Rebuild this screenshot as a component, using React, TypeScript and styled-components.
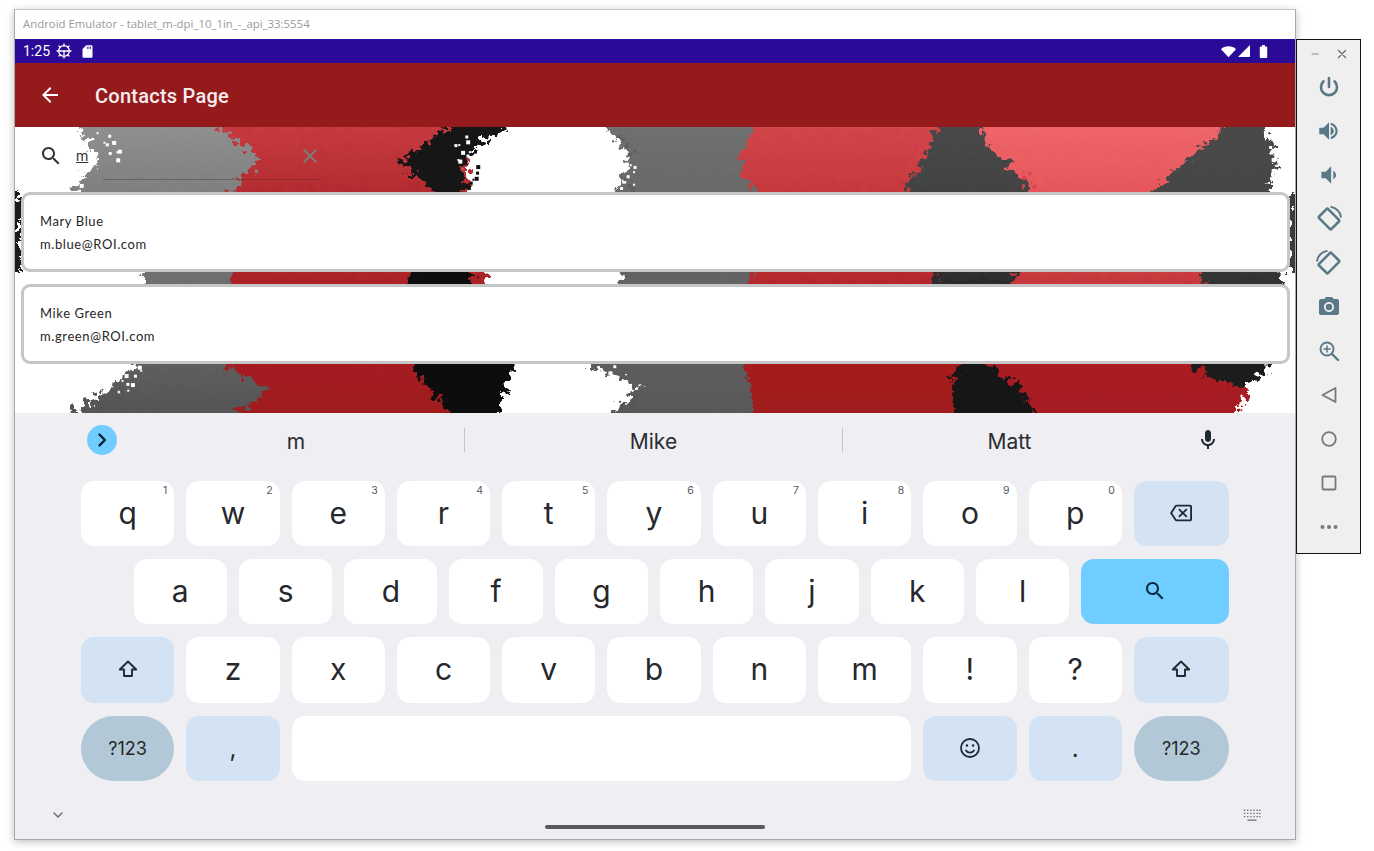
import React from 'react';
import styled, { createGlobalStyle } from 'styled-components';

const GlobalStyle = createGlobalStyle`
    html, body {
        margin: 0;
        padding: 0;
        background: #ffffff;
        font-family: "Roboto", "Liberation Sans", sans-serif;
    }
`;

const PATHS = {
    search: 'M15.5 14h-.79l-.28-.27C15.41 12.59 16 11.11 16 9.5 16 5.91 13.09 3 9.5 3S3 5.91 3 9.5 5.91 16 9.5 16c1.61 0 3.09-.59 4.23-1.57l.27.28v.79l5 4.99L20.49 19l-4.99-5zm-6 0C7.01 14 5 11.99 5 9.5S7.01 5 9.5 5 14 7.01 14 9.5 11.99 14 9.5 14z',
    back: 'M20 11H7.83l5.59-5.59L12 4l-8 8 8 8 1.41-1.41L7.83 13H20v-2z',
    close: 'M19 6.41L17.59 5 12 10.59 6.41 5 5 6.41 10.59 12 5 17.59 6.41 19 12 13.41 17.59 19 19 17.59 13.41 12z',
    mic: 'M12 14c1.66 0 3-1.34 3-3V5c0-1.66-1.34-3-3-3S9 3.34 9 5v6c0 1.66 1.34 3 3 3zm5-3c0 2.76-2.24 5-5 5s-5-2.24-5-5H5c0 3.53 2.61 6.43 6 6.92V21h2v-3.08c3.39-.49 6-3.39 6-6.92h-2z',
    backspace: 'M22 3H7c-.69 0-1.23.35-1.59.88L0 12l5.41 8.11c.36.53.9.89 1.59.89h15c1.1 0 2-.9 2-2V5c0-1.1-.9-2-2-2zm0 16H7.07L2.4 12l4.66-7H22v14zm-11.59-2L14 13.41 17.59 17 19 15.59 15.41 12 19 8.41 17.59 7 14 10.59 10.41 7 9 8.41 12.59 12 9 15.59z',
    volumeUp: 'M3 9v6h4l5 5V4L7 9H3zm10.5-4.6v2.1c2.7.7 4.5 3 4.5 5.5s-1.800 4.800-4.500 5.500v2.100c3.900-.800 6.500-4 6.500-7.600s-2.600-6.800-6.500-7.600zM13.500 8v8c1.800-.700 3-2.200 3-4s-1.200-3.300-3-4z',
    volumeDown: 'M5 9v6h4l5 5V4L9 9H5zm13.500 3c0-1.770-1.020-3.290-2.500-4.030v8.050c1.480-.730 2.500-2.250 2.500-4.020z',
    camera: 'M9 2L7.170 4H4c-1.100 0-2 .900-2 2v12c0 1.100.900 2 2 2h16c1.100 0 2-.900 2-2V6c0-1.100-.900-2-2-2h-3.170L15 2H9zm3 15c-2.760 0-5-2.240-5-5s2.240-5 5-5 5 2.240 5 5-2.240 5-5 5zm0-8.200a3.200 3.200 0 1 0 0 6.400 3.200 3.200 0 0 0 0-6.400z',
    sdCard: 'M18 2h-8L4.020 8 4 20c0 1.100.900 2 2 2h12c1.100 0 2-.900 2-2V4c0-1.100-.900-2-2-2zM11 4h1.200v4H11zM13.700 4h1.200v4h-1.200zM16.400 4h1.200v4h-1.200z',
};

const Svg = styled.svg<{ $size: number; $color: string }>`
    display: block;
    flex: none;
    width: ${p => p.$size}px;
    height: ${p => p.$size}px;
    fill: ${p => p.$color};
    fill-rule: evenodd;
`;

const Line = styled.g<{ $color: string; $width: number }>`
    fill: none;
    stroke: ${p => p.$color};
    stroke-width: ${p => p.$width};
    stroke-linecap: round;
    stroke-linejoin: round;
`;

const Icon = ({ d, size = 24, color = '#000' }: { d: string; size?: number; color?: string }) => (
    <Svg viewBox="0 0 24 24" $size={size} $color={color}><path d={d} /></Svg>
);

const Stroke = ({ size = 24, color = '#000', width = 2, children }: { size?: number; color?: string; width?: number; children: React.ReactNode }) => (
    <Svg viewBox="0 0 24 24" $size={size} $color="none"><Line $color={color} $width={width}>{children}</Line></Svg>
);

const ShiftIcon = () => (
    <Stroke size={24} color="#1f2a33" width={1.9}>
        <path d="M12 4.500 L3.800 12.500 H8 V19 H16 V12.500 H20.200 Z" />
    </Stroke>
);

const EmojiIcon = () => (
    <Stroke size={24} color="#1f2a33" width={1.8}>
        <circle cx="12" cy="12" r="9" />
        <path d="M8 14.500c1 1.500 2.400 2.200 4 2.200s3-.700 4-2.200" />
        <path d="M8.900 9.500h.1M15 9.500h.1" strokeWidth="2.400" />
    </Stroke>
);

// status bar glyphs
const GearIcon = () => (
    <Stroke size={16} color="#fff" width={2}>
        <circle cx="12" cy="12" r="8" />
        <path d="M4 12h16M12 12v8M12 1.500v3M12 19.500v3M1.500 12h3M19.500 12h3M4.500 4.500l2 2M17.500 17.500l2 2M19.500 4.500l-2 2M4.500 19.500l2-2" />
    </Stroke>
);

const WifiIcon = () => (
    <Svg viewBox="0 0 16 12" $size={15} $color="#fff"><path d="M0 3.500C2 1.500 5 .500 8 .500s6 1 8 3L8 12z" /></Svg>
);

const SignalIcon = () => (
    <Svg viewBox="0 0 12 12" $size={12} $color="#fff"><path d="M12 0v12H0z" /></Svg>
);

const BatteryIcon = () => (
    <Svg viewBox="0 0 8 14" $size={13} $color="#fff"><path d="M2.500 0h3v1.500H7c.600 0 1 .400 1 1V13c0 .600-.400 1-1 1H1c-.600 0-1-.400-1-1V2.500c0-.600.400-1 1-1h1.500z" /></Svg>
);

// emulator side panel glyphs
const PowerIcon = () => (
    <Stroke size={24} color="#5b7887" width={2.600}>
        <path d="M12 3v9" />
        <path d="M6.500 6.300a8 8 0 1 0 11 0" />
    </Stroke>
);

const RotateIcon = ({ flip }: { flip?: boolean }) => (
    <Stroke size={28} color="#5b7887" width={2.200}>
        <g transform={flip ? 'translate(24 0) scale(-1 1)' : undefined}>
            <rect x="6.500" y="4.500" width="11" height="15" rx="1" transform="rotate(-45 12 12)" />
            <path d="M14 1.800c4 .600 7.500 4 8.200 8.200" strokeWidth="1.700" />
        </g>
    </Stroke>
);

const ZoomIcon = () => (
    <Stroke size={24} color="#5b7887" width={1.900}>
        <circle cx="10" cy="10" r="6.500" />
        <path d="M15 15l6 6" strokeWidth="2.400" />
        <path d="M10 7v6M7 10h6" strokeWidth="1.500" />
    </Stroke>
);

const NavTriangle = () => (
    <Stroke size={24} color="#77797c" width={1.800}>
        <path d="M18.500 5v14L5.500 12z" />
    </Stroke>
);

const NavCircle = () => (
    <Stroke size={24} color="#77797c" width={1.800}>
        <circle cx="12" cy="12" r="6.800" />
    </Stroke>
);

const NavSquare = () => (
    <Stroke size={24} color="#77797c" width={1.800}>
        <rect x="5.500" y="5.500" width="13" height="13" rx="1" />
    </Stroke>
);

const MoreIcon = () => (
    <Svg viewBox="0 0 24 24" $size={24} $color="#77797c">
        <circle cx="5.500" cy="12" r="2" />
        <circle cx="12" cy="12" r="2" />
        <circle cx="18.500" cy="12" r="2" />
    </Svg>
);

const KeyboardDots = () => (
    <Svg viewBox="0 0 20 14" $size={18} $color="#6a6d72">
        <path d="M1 1h1.500v1.500H1zM4.500 1H6v1.500H4.500zM8 1h1.500v1.500H8zM11.500 1H13v1.500h-1.500zM15 1h1.500v1.500H15zM18 1h1.500v1.500H18zM1 4.500h1.500V6H1zM4.500 4.500H6V6H4.500zM8 4.500h1.500V6H8zM11.500 4.500H13V6h-1.500zM15 4.500h1.500V6H15zM18 4.500h1.500V6H18zM1 8h1.500v1.500H1zM4.500 8H6v1.500H4.500zM8 8h1.500v1.500H8zM11.500 8H13v1.500h-1.500zM15 8h1.500v1.500H15zM18 8h1.500v1.500H18zM5 12h10v1.500H5z" />
    </Svg>
);

// splashed backdrop of the contacts page, shapes overshoot so the rough edge stays off canvas
const SPLASHES: { fill: string; d: string }[] = [
    { fill: 'url(#greyA)', d: 'M62 -30L62 0 85 33 55 63 100 100 132 150 118 240 90 265 55 286 50 320H300V-30z' },
    { fill: 'url(#redA)', d: 'M205 -30V0L245 33 215 63 225 100 215 150 210 240 258 262 220 286V320H435L452 240 470 150 455 65 450 -30z' },
    { fill: 'url(#blackA)', d: 'M432 -30H490V0L470 14 449 33 450 63 455 150 500 237 490 262 485 286V320H435V286L415 262 400 245 395 150 420 63 384 36 415 15 432 0z' },
    { fill: 'url(#greyB)', d: 'M592 -30V0L615 30 600 63 605 150 572 237 625 260 595 286V320H770V-30z' },
    { fill: 'url(#redB)', d: 'M740 -30V0L722 33 742 65 735 150 730 240 738 286V320H1000V-30z' },
    { fill: 'url(#redC)', d: 'M950 -30V320H1222V286L1235 262 1215 237 1200 150 1140 63 1170 33 1215 0V-30z' },
    { fill: 'url(#darkA)', d: 'M922 -30H968V0L972 20 990 33 1015 60 1000 150 970 237 1005 260 1020 286V320H940V286L935 260 945 237 920 150 890 60 908 33 922 0z' },
    { fill: 'url(#darkB)', d: 'M1212 -30H1250V0L1262 33 1255 63 1265 150 1257 237 1240 254 1212 258 1175 237 1190 150 1140 62 1170 33 1212 0z' },
    { fill: '#1a1a1a', d: 'M-30 66H6V145H-30z' },
    { fill: '#3a3a3a', d: 'M1274 66H1310V145H1274z' },
];

// loose flecks along the splash edges: x, y, drift and colour of each run
const FLECK_RUNS: [number, number, number, string][] = [
    [88, 6, 16, '#ffffff'], [60, 52, -12, '#ffffff'],
    [120, 240, -16, '#ffffff'], [100, 262, -12, '#555555'],
    [600, 6, 18, '#5f5f5f'], [615, 34, -5, '#ffffff'], [612, 50, -4, '#5f5f5f'],
    [598, 240, 12, '#ffffff'], [612, 270, -8, '#555555'],
    [1260, 18, 4, '#ffffff'], [1270, 44, 3, '#ffffff'],
    [905, 12, -6, '#d2454a'], [1010, 44, 4, '#d2454a'], [445, 10, 4, '#ffffff'], [455, 40, -3, '#111111'],
];

const FLECKS = FLECK_RUNS.flatMap(([x, y, drift, color], run) =>
    Array.from({ length: 9 }, (_, i) => ({
        x: x + (drift * i) / 9 + Math.sin((run + 1) * (i + 3) * 1.7) * 7,
        y: y + i * 3 + Math.cos((run + 2) * (i + 1)) * 2,
        size: 2 + ((run + i) % 3),
        color,
    })),
);

const Backdrop = () => (
    <BackdropSvg viewBox="0 0 1280 286" preserveAspectRatio="none">
        <defs>
            <linearGradient id="greyA" x1="0" y1="0" x2="0" y2="286" gradientUnits="userSpaceOnUse">
                <stop offset="0" stopColor="#8f8f8f" />
                <stop offset="0.25" stopColor="#7e7e7e" />
                <stop offset="1" stopColor="#555555" />
            </linearGradient>
            <linearGradient id="greyB" x1="0" y1="0" x2="0" y2="286" gradientUnits="userSpaceOnUse">
                <stop offset="0" stopColor="#6f6f6f" />
                <stop offset="1" stopColor="#595959" />
            </linearGradient>
            <linearGradient id="redA" x1="0" y1="0" x2="0" y2="286" gradientUnits="userSpaceOnUse">
                <stop offset="0" stopColor="#c63a3e" />
                <stop offset="0.25" stopColor="#b22a2e" />
                <stop offset="1" stopColor="#a01a1e" />
            </linearGradient>
            <linearGradient id="redB" x1="0" y1="0" x2="0" y2="286" gradientUnits="userSpaceOnUse">
                <stop offset="0" stopColor="#d2454a" />
                <stop offset="0.25" stopColor="#c5373c" />
                <stop offset="0.8" stopColor="#a61b1f" />
                <stop offset="1" stopColor="#a01a1e" />
            </linearGradient>
            <linearGradient id="redC" x1="0" y1="0" x2="0" y2="286" gradientUnits="userSpaceOnUse">
                <stop offset="0" stopColor="#ef656a" />
                <stop offset="0.25" stopColor="#e45558" />
                <stop offset="0.8" stopColor="#ab1e22" />
                <stop offset="1" stopColor="#a51c20" />
            </linearGradient>
            <linearGradient id="blackA" x1="0" y1="0" x2="0" y2="286" gradientUnits="userSpaceOnUse">
                <stop offset="0" stopColor="#141414" />
                <stop offset="1" stopColor="#0c0c0c" />
            </linearGradient>
            <linearGradient id="darkA" x1="0" y1="0" x2="0" y2="286" gradientUnits="userSpaceOnUse">
                <stop offset="0" stopColor="#484848" />
                <stop offset="0.3" stopColor="#414141" />
                <stop offset="0.8" stopColor="#161616" />
                <stop offset="1" stopColor="#141414" />
            </linearGradient>
            <linearGradient id="darkB" x1="0" y1="0" x2="0" y2="286" gradientUnits="userSpaceOnUse">
                <stop offset="0" stopColor="#4a4a4a" />
                <stop offset="0.3" stopColor="#444444" />
                <stop offset="0.85" stopColor="#1c1c1c" />
                <stop offset="1" stopColor="#161616" />
            </linearGradient>
            <filter id="rough" x="-5%" y="-20%" width="110%" height="140%">
                <feTurbulence type="fractalNoise" baseFrequency="0.13" numOctaves="4" seed="11" result="noise" />
                <feDisplacementMap in="SourceGraphic" in2="noise" scale="22" xChannelSelector="R" yChannelSelector="G" />
            </filter>
        </defs>
        <rect width="1280" height="286" fill="#ffffff" />
        <g filter="url(#rough)">
            {SPLASHES.map(s => <path key={s.d} d={s.d} fill={s.fill} />)}
        </g>
        {FLECKS.map((f, i) => <rect key={i} x={f.x} y={f.y} width={f.size} height={f.size} fill={f.color} />)}
    </BackdropSvg>
);

type KeyKind = 'letter' | 'mod' | 'action' | 'pill';

interface IKey {
    label?: string;
    hint?: string;
    icon?: React.ReactNode;
    kind?: KeyKind;
    span?: number;
    start?: number;
    size?: number;
}

const letters = (chars: string, hints = ''): IKey[] =>
    chars.split('').map((c, i) => ({ label: c, hint: hints[i] }));

const KEYS: IKey[] = [
    ...letters('qwertyuiop', '1234567890'),
    { kind: 'mod', icon: <Icon d={PATHS.backspace} size={22} color="#1f2a33" /> },
    { label: 'a', start: 2 },
    ...letters('sdfghjkl'),
    { kind: 'action', span: 3, icon: <Icon d={PATHS.search} size={24} color="#0b2a3f" /> },
    { kind: 'mod', icon: <ShiftIcon /> },
    ...letters('zxcvbnm!?'),
    { kind: 'mod', icon: <ShiftIcon /> },
    { kind: 'pill', label: '?123', size: 18 },
    { kind: 'mod', label: ',', size: 24 },
    { span: 12 },
    { kind: 'mod', icon: <EmojiIcon /> },
    { kind: 'mod', label: '.', size: 24 },
    { kind: 'pill', label: '?123', size: 18 },
];

const SIDE_ICONS: React.ReactNode[] = [
    <PowerIcon />,
    <Icon d={PATHS.volumeUp} size={26} color="#5b7887" />,
    <Icon d={PATHS.volumeDown} size={26} color="#5b7887" />,
    <RotateIcon />,
    <RotateIcon flip />,
    <Icon d={PATHS.camera} size={24} color="#5b7887" />,
    <ZoomIcon />,
    <NavTriangle />,
    <NavCircle />,
    <NavSquare />,
    <MoreIcon />,
];

const CONTACTS = [
    { name: 'Mary Blue', email: 'm.blue@ROI.com' },
    { name: 'Mike Green', email: 'm.green@ROI.com' },
];

export default function App() {
    return (
        <Page>
            <GlobalStyle />
            <EmulatorWindow>
                <TitleBar>Android Emulator - tablet_m-dpi_10_1in_-_api_33:5554</TitleBar>
                <StatusBar>
                    <StatusTime>1:25</StatusTime>
                    <GearIcon />
                    <SdSlot><Icon d={PATHS.sdCard} size={15} color="#fff" /></SdSlot>
                    <StatusRight>
                        <WifiIcon />
                        <SignalIcon />
                        <BatteryIcon />
                    </StatusRight>
                </StatusBar>
                <AppBar>
                    <Icon d={PATHS.back} color="#fff" />
                    <AppTitle>Contacts Page</AppTitle>
                </AppBar>
                <Content>
                    <Backdrop />
                    <SearchRow>
                        <Icon d={PATHS.search} color="#333" />
                        <SearchText>m</SearchText>
                        <Icon d={PATHS.close} color="#7c7c7c" />
                        <SearchLine />
                    </SearchRow>
                    <ContactList>
                        {CONTACTS.map(c => (
                            <ContactCard key={c.email}>
                                <ContactLine>{c.name}</ContactLine>
                                <ContactLine>{c.email}</ContactLine>
                            </ContactCard>
                        ))}
                    </ContactList>
                </Content>
                <Keyboard>
                    <Suggestions>
                        <ExpandButton>
                            <Stroke size={20} color="#0b2233" width={2.800}><path d="M9 5.500l6.500 6.500L9 18.500" /></Stroke>
                        </ExpandButton>
                        <Suggestion $width={336}>m</Suggestion>
                        <Suggestion $width={378} $divided>Mike</Suggestion>
                        <Suggestion $width={334} $divided>Matt</Suggestion>
                        <Icon d={PATHS.mic} size={24} color="#1f2a33" />
                    </Suggestions>
                    <KeyGrid>
                        {KEYS.map((k, i) => (
                            <Key key={i} $kind={k.kind ?? 'letter'} $span={k.span ?? 2} $start={k.start} $size={k.size}>
                                {k.icon ?? k.label}
                                {k.hint && <KeyHint>{k.hint}</KeyHint>}
                            </Key>
                        ))}
                    </KeyGrid>
                    <NavRow>
                        <Stroke size={16} color="#62666b" width={2}><path d="M6 9l6 6 6-6" /></Stroke>
                        <HomeBar />
                        <KeyboardDots />
                    </NavRow>
                </Keyboard>
            </EmulatorWindow>
            <SidePanel>
                <PanelHeader>
                    <Stroke size={12} color="#8a8a8a" width={2}><path d="M6 12h12" /></Stroke>
                    <Stroke size={12} color="#5c6a72" width={2.400}><path d="M5 5l14 14M19 5L5 19" /></Stroke>
                </PanelHeader>
                {SIDE_ICONS.map((icon, i) => <PanelButton key={i}>{icon}</PanelButton>)}
            </SidePanel>
        </Page>
    );
}

const Page = styled.div`
    display: flex;
    align-items: flex-start;
    padding: 9px 0 0 14px;
    height: 851px;
    box-sizing: border-box;
    overflow: hidden;
`;

const EmulatorWindow = styled.div`
    width: 1280px;
    flex: none;
    display: flex;
    flex-direction: column;
    border: 1px solid #a9a9a9;
    border-top-color: #c4c4c4;
    box-shadow: 0 2px 8px rgba(0, 0, 0, 0.25);
    background: #ffffff;
`;

const TitleBar = styled.div`
    height: 29px;
    padding: 0 0 2px 8px;
    box-sizing: border-box;
    display: flex;
    align-items: center;
    font-family: "Open Sans", "Noto Sans", sans-serif;
    font-size: 11.4px;
    color: #9a9a9a;
`;

const StatusBar = styled.div`
    height: 24px;
    padding: 0 25px 0 8px;
    display: flex;
    align-items: center;
    background: #2a0a96;
    color: #ffffff;
`;

const StatusTime = styled.span`
    font-size: 14px;
    margin-right: 6px;
`;

const SdSlot = styled.span`
    margin-left: 8px;
`;

const StatusRight = styled.div`
    margin-left: auto;
    display: flex;
    align-items: center;
    gap: 2px;
    & > svg:last-child {
        margin-left: 5px;
    }
`;

const AppBar = styled.div`
    height: 64px;
    padding-left: 23px;
    display: flex;
    align-items: center;
    background: #951a1c;
`;

const AppTitle = styled.h1`
    margin: 1px 0 0 33px;
    font-size: 20px;
    font-weight: 500;
    letter-spacing: 0.25px;
    color: #f6eeee;
`;

const Content = styled.div`
    position: relative;
    height: 286px;
    overflow: hidden;
`;

const BackdropSvg = styled.svg`
    position: absolute;
    inset: 0;
    width: 100%;
    height: 100%;
`;

const SearchRow = styled.div`
    position: relative;
    height: 65px;
    padding: 0 0 8px 24px;
    box-sizing: border-box;
    display: flex;
    align-items: center;
    width: 307px;
`;

const SearchText = styled.span`
    flex: 1;
    margin-left: 13px;
    font-size: 14px;
    color: #333333;
    text-decoration: underline;
`;

const SearchLine = styled.div`
    position: absolute;
    left: 88px;
    right: 0;
    top: 52px;
    height: 1px;
    background: rgba(40, 40, 40, 0.3);
`;

const ContactList = styled.div`
    position: relative;
    display: flex;
    flex-direction: column;
    gap: 12px;
    padding: 0 5px 0 6px;
`;

const ContactCard = styled.div`
    height: 80px;
    box-sizing: border-box;
    padding: 0 16px;
    display: flex;
    flex-direction: column;
    justify-content: center;
    gap: 5px;
    background: #ffffff;
    border: 3px solid #c6c6c6;
    border-radius: 9px;
`;

const ContactLine = styled.div`
    font-family: "Lato", "Noto Sans", sans-serif;
    font-size: 13px;
    line-height: 18px;
    letter-spacing: 0.6px;
    color: #262626;
`;

const Keyboard = styled.div`
    height: 426px;
    display: flex;
    flex-direction: column;
    background: #eeeef3;
`;

const Suggestions = styled.div`
    height: 68px;
    padding: 0 0 14px 72px;
    flex: none;
    display: flex;
    align-items: center;
    box-sizing: border-box;
    & > svg {
        margin-left: 20px;
    }
`;

const ExpandButton = styled.div`
    width: 30px;
    height: 30px;
    margin-right: 11px;
    border-radius: 50%;
    background: #70cdff;
    display: flex;
    align-items: center;
    justify-content: center;
`;

const Suggestion = styled.div<{ $width: number; $divided?: boolean }>`
    width: ${p => p.$width}px;
    height: 24px;
    padding-top: 2px;
    display: flex;
    align-items: center;
    justify-content: center;
    font-family: "Inter", "Roboto", sans-serif;
    font-size: 21px;
    color: #2a2c30;
    box-sizing: border-box;
    border-left: ${p => (p.$divided ? '1px solid #c5c6cb' : 'none')};
`;

const KeyGrid = styled.div`
    flex: none;
    margin-left: 66px;
    width: 1148px;
    display: grid;
    grid-template-columns: repeat(20, 40.65px) 41.5px 41.5px;
    grid-template-rows: 65px 65px 66px 65px;
    column-gap: 12px;
    row-gap: 13px;
`;

const KEY_BG: Record<KeyKind, string> = {
    letter: '#ffffff',
    mod: '#d3e3f3',
    action: '#70cdff',
    pill: '#b2c8d6',
};

const Key = styled.div<{ $kind: KeyKind; $span: number; $start?: number; $size?: number }>`
    position: relative;
    grid-column: ${p => (p.$start ? `${p.$start} / span ${p.$span}` : `span ${p.$span}`)};
    display: flex;
    align-items: center;
    justify-content: center;
    background: ${p => KEY_BG[p.$kind]};
    border-radius: ${p => (p.$kind === 'pill' ? '33px' : '13px')};
    font-family: "Inter", "Roboto", sans-serif;
    font-size: ${p => p.$size ?? 30}px;
    font-weight: 400;
    line-height: 1;
    padding-bottom: ${p => (p.$size ? 0 : 2)}px;
    box-sizing: border-box;
    color: #26282c;
`;

const KeyHint = styled.span`
    position: absolute;
    top: 5px;
    right: 7px;
    font-size: 10.5px;
    color: #55585c;
`;

const NavRow = styled.div`
    flex: 1;
    padding: 10px 34px 0 35px;
    display: flex;
    align-items: center;
    justify-content: space-between;
`;

const HomeBar = styled.div`
    width: 220px;
    height: 4px;
    margin: 24px 0 0 0;
    border-radius: 2px;
    background: #5a5a5e;
`;

const SidePanel = styled.div`
    width: 63px;
    height: 513px;
    flex: none;
    margin-top: 30px;
    display: flex;
    flex-direction: column;
    align-items: center;
    background: #efefef;
    border: 1px solid #111111;
`;

const PanelHeader = styled.div`
    height: 25px;
    width: 100%;
    padding: 3px 12px 0 12px;
    box-sizing: border-box;
    display: flex;
    align-items: center;
    justify-content: space-between;
`;

const PanelButton = styled.div`
    height: 44px;
    width: 100%;
    display: flex;
    align-items: center;
    justify-content: center;
`;
